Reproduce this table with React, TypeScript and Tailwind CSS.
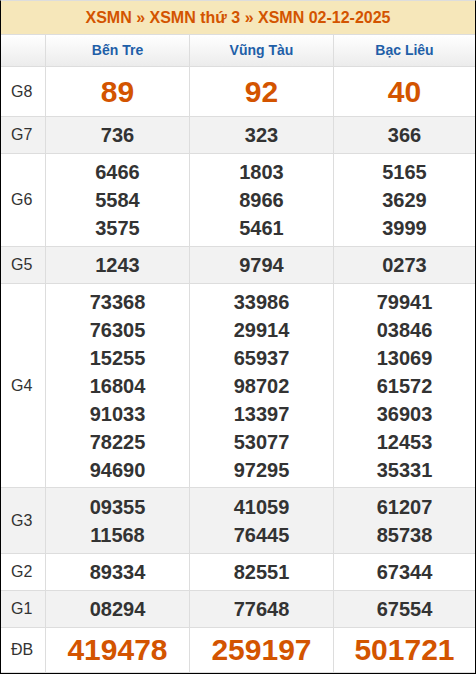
import React from "react";

type Row = { label: string; vals: string[][]; big?: boolean; alt?: boolean; h: string };

const rows: Row[] = [
  { label: "G8", vals: [["89"], ["92"], ["40"]], big: true, h: "h-[50px]" },
  { label: "G7", vals: [["736"], ["323"], ["366"]], alt: true, h: "h-[37px]" },
  { label: "G6", vals: [["6466", "5584", "3575"], ["1803", "8966", "5461"], ["5165", "3629", "3999"]], h: "h-[93px]" },
  { label: "G5", vals: [["1243"], ["9794"], ["0273"]], alt: true, h: "h-[37px]" },
  {
    label: "G4",
    vals: [
      ["73368", "76305", "15255", "16804", "91033", "78225", "94690"],
      ["33986", "29914", "65937", "98702", "13397", "53077", "97295"],
      ["79941", "03846", "13069", "61572", "36903", "12453", "35331"],
    ],
    h: "h-[204px]",
  },
  { label: "G3", vals: [["09355", "11568"], ["41059", "76445"], ["61207", "85738"]], alt: true, h: "h-[66px]" },
  { label: "G2", vals: [["89334"], ["82551"], ["67344"]], h: "h-[37px]" },
  { label: "G1", vals: [["08294"], ["77648"], ["67554"]], alt: true, h: "h-[37px]" },
  { label: "ĐB", vals: [["419478"], ["259197"], ["501721"]], big: true, h: "h-[45px]" },
];

export default function App() {
  return (
    <div
      className="w-[476px] h-[674px] bg-white border-l border-r border-b border-black border-t border-t-[#dddddd] overflow-hidden"
      style={{ fontFamily: '"Liberation Sans", Arial, sans-serif' }}
    >
      <div className="h-[34px] bg-[#f6e7ba] flex items-center justify-center text-[16px] font-bold text-[#d35400] border-b border-[#dddddd]">
        XSMN » XSMN thứ 3 » XSMN 02-12-2025
      </div>
      <div className="grid grid-cols-[45px_144px_144px_1fr] h-[32px] bg-gradient-to-b from-white to-[#ececec] border-b border-[#dddddd]">
        <div className="border-r border-[#dddddd]" />
        {["Bến Tre", "Vũng Tàu", "Bạc Liêu"].map((n, i) => (
          <div
            key={n}
            className={`flex items-center justify-center text-[14px] font-bold text-[#1f5fa8] ${i < 2 ? "border-r border-[#dddddd]" : ""}`}
          >
            {n}
          </div>
        ))}
      </div>
      {rows.map((r) => (
        <div
          key={r.label}
          className={`grid grid-cols-[45px_144px_144px_1fr] ${r.h} border-b border-[#dddddd] ${r.alt ? "bg-[#f2f2f2]" : "bg-white"}`}
        >
          <div className="border-r border-[#dddddd] flex items-center pl-[10px] text-[16px] text-[#333333]">
            {r.label}
          </div>
          {r.vals.map((col, i) => (
            <div
              key={i}
              className={`flex flex-col items-center justify-center ${i < 2 ? "border-r border-[#dddddd]" : ""}`}
            >
              {col.map((v) => (
                <div
                  key={v}
                  className={
                    r.big
                      ? "text-[30px] leading-[40px] font-bold text-[#d35400]"
                      : "text-[20px] leading-[28px] font-bold text-[#333333]"
                  }
                >
                  {v}
                </div>
              ))}
            </div>
          ))}
        </div>
      ))}
    </div>
  );
}
